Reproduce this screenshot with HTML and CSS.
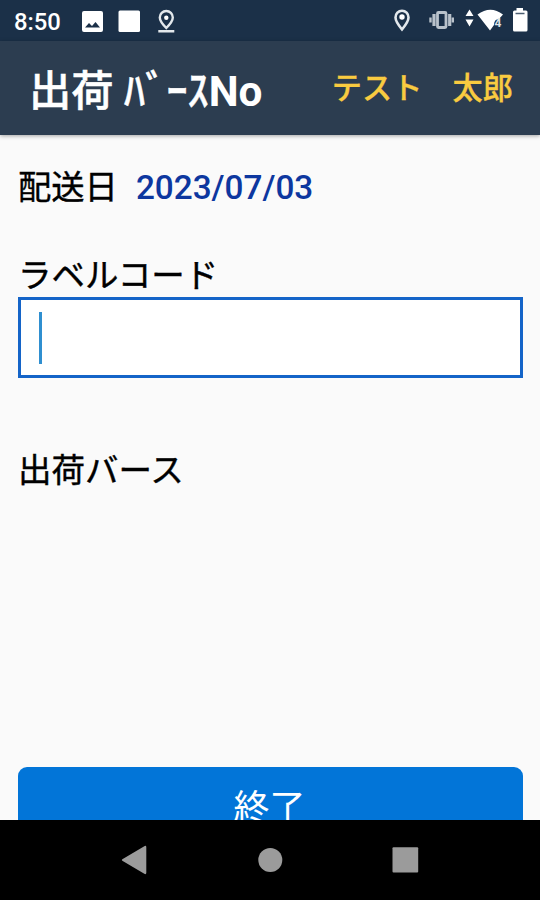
FILE: index.html
```html
<!DOCTYPE html>
<html lang="ja">
<head>
    <meta charset="UTF-8">
    <meta name="viewport" content="width=device-width, initial-scale=1.0">
    <title>出荷バースNo</title>
    <link rel="stylesheet" href="styles.css">
</head>
<body>
    <div class="status-bar">
        <span class="clock">8:50</span>
        <svg class="status-left" viewBox="0 0 100 41">
            <path fill="#fff" fill-rule="evenodd" d="M6 11h17a2 2 0 0 1 2 2v17a2 2 0 0 1-2 2H6a2 2 0 0 1-2-2V13a2 2 0 0 1 2-2zM7 27.500h15l-4.500-5.500-3.500 4-3-3z"/>
            <rect x="40.500" y="10.500" width="21.500" height="21.500" rx="1.500" fill="#fff"/>
            <path fill="none" stroke="#e3e8ec" stroke-width="2.400" d="M88.300 28c-4-4-6.500-7-6.500-10.500a6.500 6.500 0 0 1 13 0c0 3.500-2.500 6.500-6.500 10.500zM80.300 31.200h16"/>
            <circle cx="88.300" cy="17.700" r="2.200" fill="#fff"/>
        </svg>
        <svg class="status-right" viewBox="0 0 160 41">
            <path fill="none" stroke="#e3e8ec" stroke-width="2.600" d="M22 29.500c-4.500-5.500-6.500-8.500-6.500-12a6.500 6.800 0 0 1 13 0c0 3.500-2 6.500-6.500 12z"/>
            <circle cx="22" cy="17" r="2.700" fill="#fff"/>
            <g fill="none" stroke="#b9c2cb">
                <rect x="57.500" y="12.500" width="8.500" height="15" rx="1" stroke-width="2.800"/>
                <path stroke-width="3.200" d="M54 14v12M69.700 14v12"/>
                <path stroke-width="2.400" d="M50.500 17.500v5M72.800 17.500v5"/>
            </g>
            <path fill="#fff" d="M89.500 9.500l4 6.500h-8zM85.500 19.500h8l-4 7z"/>
            <path fill="#fff" d="M97.500 14.500q13-9.500 25.500 0l-4 4.500q-5 0-5 6l-4 5.500z"/>
            <text class="wifi-num" x="114.500" y="27">4</text>
            <path fill="#fff" d="M136.500 8h6.500v2.500h3a1.500 1.500 0 0 1 1.500 1.500v18a1.500 1.500 0 0 1-1.500 1.500h-11.500a1.500 1.500 0 0 1-1.500-1.500V12a1.500 1.500 0 0 1 1.500-1.500h2z"/>
            <path stroke="#4b5d70" stroke-width="1.500" d="M135.500 13.500h9"/>
        </svg>
    </div>

    <header class="header">
        <h1 class="title">出荷 ﾊﾞｰｽ<b>No</b></h1>
        <div class="user">テスト　太郎</div>
    </header>

    <main class="content">
        <div class="date-row">
            <span class="date-label">配送日</span>
            <span class="date">2023/07/03</span>
        </div>
        <div class="label">ラベルコード</div>
        <div class="code-input"><span class="caret"></span></div>
        <div class="label berth">出荷バース</div>
        <button class="end-btn">終了</button>
    </main>

    <nav class="nav-bar">
        <svg viewBox="0 0 540 80">
            <g fill="#9b9b9b">
                <path d="M122.300 39.200l22-13q2-1 2 1v25.600q0 2-2 1l-22-13q-1-.800 0-1.600z"/>
                <circle cx="270.300" cy="40" r="12"/>
                <rect x="392.500" y="27.300" width="25.700" height="25.200" rx="1"/>
            </g>
        </svg>
    </nav>
</body>
</html>
```

FILE: styles.css
```css
* {
    box-sizing: border-box;
}
body {
    display: flex;
    flex-direction: column;
    height: 900px;
    margin: 0;
    overflow: hidden;
    background-color: #fafafa;
    color: #000;
    font-family: Roboto, "Noto Sans CJK JP", sans-serif;
}
.status-bar {
    display: flex;
    flex: none;
    align-items: center;
    height: 41px;
    padding-left: 14px;
    background-color: #1b3048;
    color: #fff;
}
.clock {
    width: 64px;
    padding-top: 4px;
    font-size: 23.8px;
    font-weight: 500;
    line-height: 1;
}
.status-left {
    width: 100px;
    height: 41px;
}
.status-right {
    width: 160px;
    height: 41px;
    margin-left: auto;
}
.wifi-num {
    fill: #dfe4e9;
    font-size: 12px;
    font-weight: bold;
}
.header {
    display: flex;
    flex: none;
    align-items: center;
    justify-content: space-between;
    height: 94px;
    padding: 0 27px 0 29px;
    background-color: #2c3d50;
    box-shadow: 0 1px 4px rgba(0, 0, 0, 0.35);
}
.title {
    margin: 0;
    padding-top: 7px;
    color: #fff;
    font-size: 42.3px;
    font-weight: 500;
    line-height: 60px;
    white-space: nowrap;
    -webkit-text-stroke: 0.5px #fff;
}
.title b {
    font-weight: bold;
    -webkit-text-stroke: 0;
}
.user {
    padding-bottom: 4px;
    color: #f9cb40;
    font-size: 30.2px;
    font-weight: 500;
    white-space: nowrap;
    -webkit-text-stroke: 0.3px #f9cb40;
}
.content {
    flex: 1;
    min-height: 0;
    padding: 29px 17px 0 18px;
    overflow: hidden;
}
.date-row {
    display: flex;
    align-items: baseline;
    gap: 18px;
    height: 48px;
    font-size: 33.3px;
    line-height: 48px;
}
.date-label {
    -webkit-text-stroke: 0.4px #000;
}
.date {
    color: #0d379f;
    font-weight: 500;
}
.label {
    height: 48px;
    margin-top: 40px;
    font-size: 33.5px;
    line-height: 48px;
    -webkit-text-stroke: 0.4px #000;
}
.code-input {
    height: 81px;
    margin-top: -3px;
    padding: 12px 18px;
    border: 3px solid #1464c8;
    background-color: #fff;
}
.caret {
    display: block;
    width: 3px;
    height: 52px;
    background-color: #2f8fd0;
}
.berth {
    margin-top: 69px;
}
.end-btn {
    display: block;
    width: 100%;
    height: 80px;
    margin-top: 272px;
    padding: 0 2px 4px 0;
    border: none;
    border-radius: 9px;
    background-color: #0275d8;
    color: #fff;
    font-family: inherit;
    font-size: 36px;
}
.nav-bar {
    flex: none;
    height: 80px;
    background-color: #000;
}
.nav-bar svg {
    display: block;
    width: 540px;
    height: 80px;
}
```
